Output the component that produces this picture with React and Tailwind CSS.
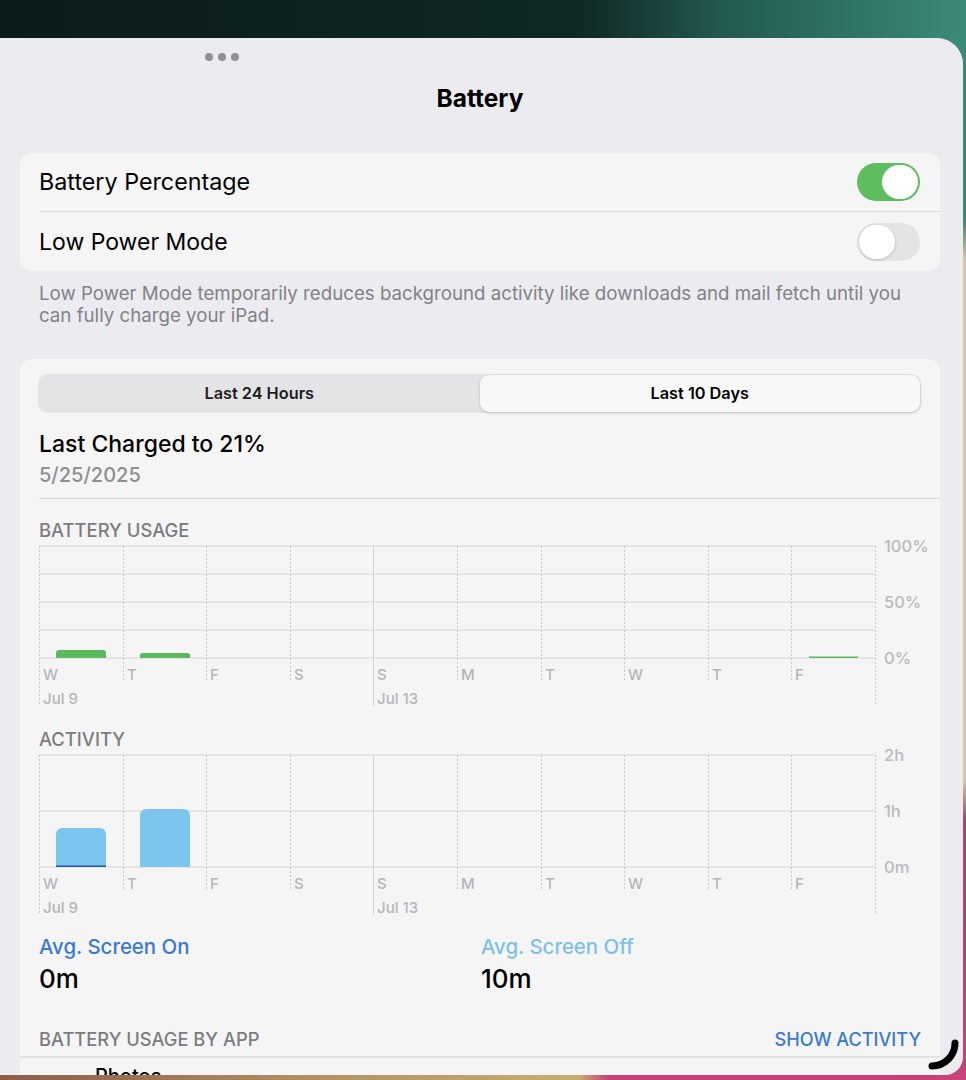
const DAYS = ["W", "T", "F", "S", "S", "M", "T", "W", "T", "F"];
const STEP = 83.6;
const GRID_W = 836;

function topRounded(x, y, w, h, r) {
  return `M${x},${y + h} V${y + r} Q${x},${y} ${x + r},${y} H${x + w - r} Q${x + w},${y} ${x + w},${y + r} V${y + h} Z`;
}

function Chart({ lines, labels, children }) {
  const verticals = Array.from({ length: 11 }, (_, i) => i);
  return (
    <svg width="900" height="170" className="block overflow-visible">
      {lines.map((y) => (
        <line key={y} x1="0" x2={GRID_W} y1={y} y2={y} stroke="#d7d7d9" strokeWidth="1" />
      ))}
      {verticals.map((i) => {
        const x = Math.round(i * STEP) + 0.5;
        const long = i === 0 || i === 4 || i === 10;
        return (
          <line
            key={i}
            x1={x}
            x2={x}
            y1="8"
            y2={long ? 168 : 143}
            stroke={i === 4 ? "#d2d2d4" : "#c6c6c8"}
            strokeWidth="1"
            strokeDasharray={i === 4 ? undefined : "2 2"}
          />
        );
      })}
      {labels.map(([text, y]) => (
        <text key={text} x="845" y={y + 6} fontSize="16.5" fontWeight="500" fill="#bababd">
          {text}
        </text>
      ))}
      {DAYS.map((d, i) => (
        <text key={i} x={Math.round(i * STEP) + 4} y="141.5" fontSize="15" fontWeight="500" fill="#b6b6b9">
          {d}
        </text>
      ))}
      <text x="4" y="165.5" fontSize="15" fontWeight="500" fill="#b6b6b9">Jul 9</text>
      <text x="338" y="165.5" fontSize="15" fontWeight="500" fill="#b6b6b9">Jul 13</text>
      {children}
    </svg>
  );
}

function Toggle({ on }) {
  if (on) {
    return (
      <div className="flex h-[38px] w-[63px] items-center justify-end rounded-full bg-[#5dbd5f] p-[2px]">
        <div className="h-[34px] w-[36px] rounded-full bg-white" />
      </div>
    );
  }
  return (
    <div className="flex h-[38px] w-[63px] items-center rounded-full bg-[#e4e4e6] p-[2px]">
      <div className="h-[34px] w-[36px] rounded-full bg-white shadow-[0_1px_3px_rgba(0,0,0,0.18)]" />
    </div>
  );
}

export default function App() {
  return (
    <div className="relative flex h-[1080px] w-[966px] flex-col overflow-hidden bg-[linear-gradient(180deg,#3b8a78_0px,#3b8a78_220px,#d8c5a2_260px,#d8c5a2_780px,#9a4b70_820px,#c24579_1080px)] font-['Inter',sans-serif]">
      {/* top wallpaper strip */}
      <div className="h-[38px] shrink-0 bg-[linear-gradient(90deg,#0b1b1a_0%,#0f2826_60%,#235a4f_75%,#3b8a78_100%)]" />

      {/* settings window */}
      <div className="mr-[3px] flex-1 overflow-hidden rounded-tr-[26px] rounded-br-[18px] bg-[#ebebf0]">
        <div className="mt-[15px] flex gap-[5px] pl-[205px]">
          <span className="h-2 w-2 rounded-full bg-[#8f8f94]" />
          <span className="h-2 w-2 rounded-full bg-[#8f8f94]" />
          <span className="h-2 w-2 rounded-full bg-[#8f8f94]" />
        </div>

        <div className="pl-5 pr-[23px]">
          <h1 className="mt-[23px] text-center text-[24.5px] font-bold leading-[28px] text-black">Battery</h1>

          {/* toggles */}
          <div className="mt-[41px] rounded-[12px] bg-[#f5f5f5]">
            <div className="ml-[19px] flex h-[59px] items-center justify-between border-b border-[#dcdcdf] pr-5">
              <span className="text-[23.3px] leading-[28px] text-black">Battery Percentage</span>
              <Toggle on />
            </div>
            <div className="ml-[19px] flex h-[59px] items-center justify-between pr-5">
              <span className="text-[23px] leading-[28px] text-black">Low Power Mode</span>
              <Toggle on={false} />
            </div>
          </div>
          <p className="mt-3 pl-[19px] pr-[17px] text-[18.7px] leading-[22px] text-[#828287]">
            Low Power Mode temporarily reduces background activity like downloads and mail fetch until you can fully charge your iPad.
          </p>

          {/* usage card */}
          <div className="mt-8 rounded-t-[12px] bg-[#f5f5f5] pb-10 pt-[15px]">
            <div className="ml-[18px] mr-[19px] grid h-[39px] grid-cols-2 rounded-[10px] bg-[#e4e4e6] p-[1px]">
              <div className="flex items-center justify-center text-[16.3px] font-semibold text-[#1c1c1e]">Last 24 Hours</div>
              <div className="flex items-center justify-center rounded-[9px] bg-[#f8f8f8] text-[16.3px] font-semibold text-black shadow-[0_1px_3px_rgba(0,0,0,0.18)]">
                Last 10 Days
              </div>
            </div>

            <div className="pl-[19px]">
              <p className="mt-[17px] text-[23px] font-medium leading-[28px] text-black">Last Charged to 21%</p>
              <p className="mt-1 text-[20px] font-medium leading-[26px] text-[#8e8e93]">5/25/2025</p>
            </div>
            <div className="ml-[19px] mt-[10px] border-b border-[#d8d8db]" />

            <div className="pl-[19px]">
              <p className="mt-[23px] text-[18.4px] font-medium leading-[16px] text-[#7c7c80]">BATTERY USAGE</p>
              <Chart lines={[8, 36, 64, 92, 120]} labels={[["100%", 8], ["50%", 64], ["0%", 120]]}>
                <path d={topRounded(17, 112, 50, 8, 3)} fill="#5cb85c" />
                <path d={topRounded(101, 115, 50, 5, 2.5)} fill="#5cb85c" />
                <rect x="770" y="118.5" width="49" height="1.5" fill="#5cb85c" />
              </Chart>

              <p className="mt-[23px] text-[18.4px] font-medium leading-[16px] text-[#7c7c80]">ACTIVITY</p>
              <Chart lines={[8, 64, 120]} labels={[["2h", 8], ["1h", 64], ["0m", 120]]}>
                <path d={topRounded(17, 81, 50, 39, 7)} fill="#7cc5ef" />
                <rect x="17" y="118.5" width="50" height="1.5" fill="#2354a8" />
                <path d={topRounded(101, 62, 50, 58, 7)} fill="#7cc5ef" />
              </Chart>
            </div>

            <div className="mt-[18px] flex pl-[19px]">
              <div className="w-[442px]">
                <p className="text-[20.4px] font-medium leading-[24px] text-[#3a79d2]">Avg. Screen On</p>
                <p className="mt-1 text-[26px] font-medium leading-[32px] text-black">0m</p>
              </div>
              <div>
                <p className="text-[20.4px] font-medium leading-[24px] text-[#7fc1ea]">Avg. Screen Off</p>
                <p className="mt-1 text-[26px] font-medium leading-[32px] text-black">10m</p>
              </div>
            </div>

            <div className="mt-[34px] flex items-center justify-between pl-[19px] pr-[19px]">
              <span className="text-[18.3px] font-medium leading-[20px] text-[#7c7c80]">BATTERY USAGE BY APP</span>
              <span className="text-[18.1px] font-medium leading-[20px] text-[#3a79d2]">SHOW ACTIVITY</span>
            </div>
            <div className="mt-[7px] border-b-2 border-[#e3e3e6]" />
            <div className="flex items-center pl-[75px] pt-[6px]">
              <span className="text-[20px] font-medium leading-[24px] text-black">Photos</span>
            </div>
          </div>
        </div>
      </div>

      {/* bottom wallpaper strip */}
      <div className="h-[5px] shrink-0 bg-[linear-gradient(90deg,#8c5c49_0%,#b49466_35%,#c8ad70_60%,#c44078_63%,#c8437c_100%)]" />

      {/* window resize grabber */}
      <svg className="absolute left-[925px] top-[1036px]" width="40" height="40">
        <path d="M30 7 A23 23 0 0 1 7 30" fill="none" stroke="#000" strokeWidth="7" strokeLinecap="round" />
      </svg>
    </div>
  );
}
